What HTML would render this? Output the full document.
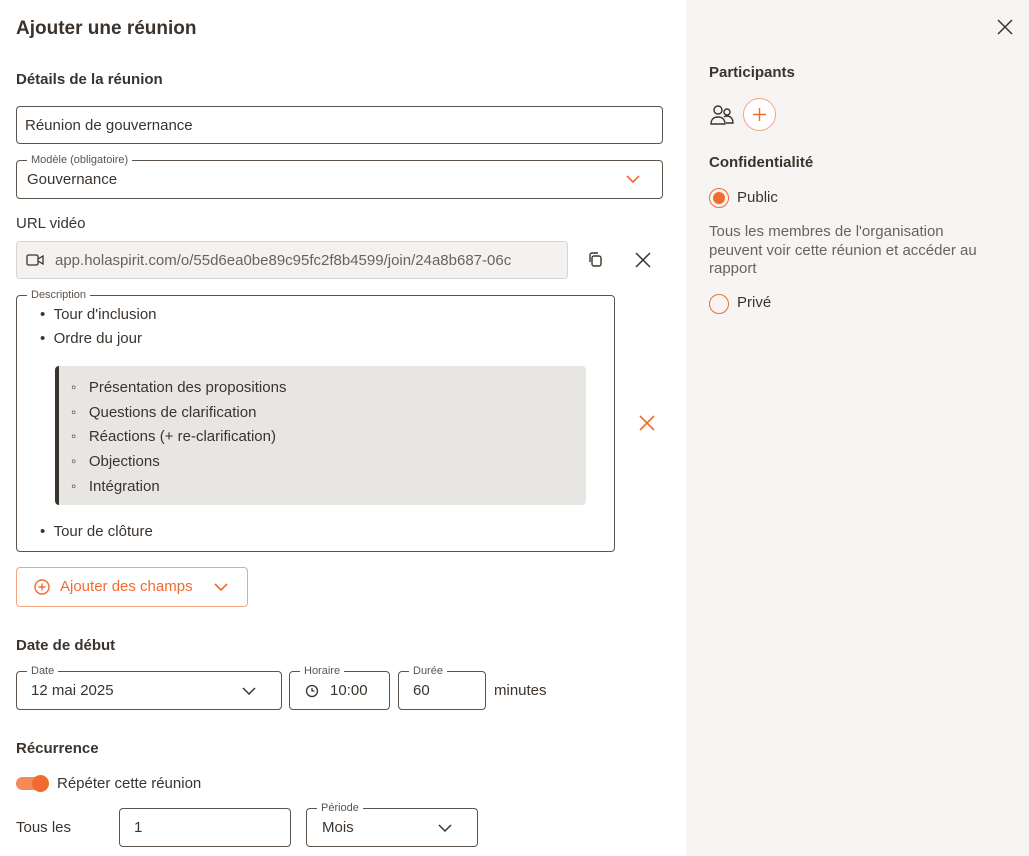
<!DOCTYPE html>
<html><head><meta charset="utf-8"><style>
*{box-sizing:border-box;margin:0;padding:0}
body{width:1029px;height:856px;overflow:hidden;font-family:"Liberation Sans",sans-serif;color:#3b332d;background:#fff;position:relative;font-size:15px}
.a{position:absolute}
.h{font-weight:bold;font-size:15px;color:#3b332d}
.box{position:absolute;border:1px solid #5d534b;border-radius:4px}
.lbl{position:absolute;top:-8px;left:10px;background:#fff;padding:0 4px;font-size:11px;color:#5d534b;line-height:14px}
.txt{position:absolute;font-size:15px;line-height:18px}
.right{position:absolute;left:686px;top:0;width:343px;height:856px;background:#f6f5f3}
</style></head><body>
<div class="a" style="left:16px;top:18px;font-size:19px;font-weight:bold">Ajouter une réunion</div>
<div class="a h" style="left:16px;top:71px">Détails de la réunion</div>
<div class="box" style="left:16px;top:106px;width:647px;height:38px"><span class="txt" style="left:8px;top:10px">Réunion de gouvernance</span></div>
<div class="box" style="left:16px;top:160px;width:647px;height:39px"><span class="lbl">Modèle (obligatoire)</span><span class="txt" style="left:10px;top:10px">Gouvernance</span>
<svg class="a" style="left:608px;top:12px" width="16" height="12" viewBox="0 0 16 12"><path d="M2 3l6 6 6-6" fill="none" stroke="#f26b2e" stroke-width="1.6"/></svg></div>
<div class="a" style="left:16px;top:215px">URL vidéo</div>
<div class="a" style="left:16px;top:241px;width:552px;height:38px;background:#f3f2f0;border:1px solid #d8d4d0;border-radius:4px;overflow:hidden">
<svg class="a" style="left:9px;top:11px" width="18" height="14" viewBox="0 0 18 14"><rect x="1" y="2" width="11" height="10" rx="1.5" fill="none" stroke="#3b332d" stroke-width="1.3"/><path d="M12 6l5-3v8l-5-3" fill="none" stroke="#3b332d" stroke-width="1.3"/></svg>
<span class="txt" style="left:38px;top:10px;color:#6b625b;white-space:nowrap">app.holaspirit.com/o/55d6ea0be89c95fc2f8b4599/join/24a8b687-06c</span></div>
<svg class="a" style="left:587px;top:251px" width="18" height="18" viewBox="0 0 18 18"><rect x="5" y="5" width="9" height="10" rx="2" fill="none" stroke="#3b332d" stroke-width="1.4"/><path d="M3 11V4a2 2 0 0 1 2-2h6" fill="none" stroke="#3b332d" stroke-width="1.4"/></svg>
<svg class="a" style="left:634px;top:251px" width="18" height="18" viewBox="0 0 18 18"><path d="M2 2l14 14M16 2L2 16" stroke="#3b332d" stroke-width="1.5"/></svg>
<div class="box" style="left:16px;top:295px;width:599px;height:257px"><span class="lbl">Description</span>
<div class="txt" style="left:23px;top:10px">• &nbsp;Tour d'inclusion</div>
<div class="txt" style="left:23px;top:34px">• &nbsp;Ordre du jour</div>
<div class="a" style="left:38px;top:70px;width:531px;height:139px;background:#e8e6e3;border-left:4px solid #3b332d;border-radius:4px">
<div class="txt" style="left:12px;top:10px;line-height:24.7px">◦ &nbsp;&nbsp;Présentation des propositions<br>◦ &nbsp;&nbsp;Questions de clarification<br>◦ &nbsp;&nbsp;Réactions (+ re-clarification)<br>◦ &nbsp;&nbsp;Objections<br>◦ &nbsp;&nbsp;Intégration</div></div>
<div class="txt" style="left:23px;top:227px">• &nbsp;Tour de clôture</div>
</div>
<svg class="a" style="left:639px;top:415px" width="16" height="16" viewBox="0 0 16 16"><path d="M1 1l14 14M15 1L1 15" stroke="#f26b2e" stroke-width="1.6"/></svg>
<div class="a" style="left:16px;top:567px;width:232px;height:40px;border:1px solid #f5a47e;border-radius:4px;color:#f26b2e">
<svg class="a" style="left:16px;top:10px" width="18" height="18" viewBox="0 0 18 18"><circle cx="9" cy="9" r="7" fill="none" stroke="#f26b2e" stroke-width="1.4"/><path d="M9 5.5v7M5.5 9h7" stroke="#f26b2e" stroke-width="1.4"/></svg>
<span class="txt" style="left:43px;top:10px">Ajouter des champs</span>
<svg class="a" style="left:196px;top:13px" width="16" height="12" viewBox="0 0 16 12"><path d="M2 3l6 6 6-6" fill="none" stroke="#f26b2e" stroke-width="1.6"/></svg></div>
<div class="a h" style="left:16px;top:637px">Date de début</div>
<div class="box" style="left:16px;top:671px;width:266px;height:39px"><span class="lbl">Date</span><span class="txt" style="left:14px;top:10px">12 mai 2025</span>
<svg class="a" style="left:224px;top:13px" width="16" height="12" viewBox="0 0 16 12"><path d="M2 3l6 6 6-6" fill="none" stroke="#3b332d" stroke-width="1.5"/></svg></div>
<div class="box" style="left:289px;top:671px;width:101px;height:39px"><span class="lbl">Horaire</span>
<svg class="a" style="left:15px;top:12px" width="14" height="14" viewBox="0 0 14 14"><circle cx="7" cy="7" r="5.5" fill="none" stroke="#3b332d" stroke-width="1.3"/><path d="M7 4v3h2.5" fill="none" stroke="#3b332d" stroke-width="1.3"/></svg>
<span class="txt" style="left:40px;top:10px">10:00</span></div>
<div class="box" style="left:398px;top:671px;width:88px;height:39px"><span class="lbl">Durée</span><span class="txt" style="left:14px;top:10px">60</span></div>
<div class="a" style="left:494px;top:682px">minutes</div>
<div class="a h" style="left:16px;top:740px">Récurrence</div>
<div class="a" style="left:16px;top:777px;width:30px;height:13px;background:#f5895a;border-radius:7px"></div>
<div class="a" style="left:32px;top:775px;width:17px;height:17px;background:#f26b2e;border-radius:50%"></div>
<div class="a" style="left:57px;top:775px">Répéter cette réunion</div>
<div class="a" style="left:16px;top:819px">Tous les</div>
<div class="box" style="left:119px;top:808px;width:172px;height:39px"><span class="txt" style="left:14px;top:10px">1</span></div>
<div class="box" style="left:306px;top:808px;width:172px;height:39px"><span class="lbl">Période</span><span class="txt" style="left:15px;top:10px">Mois</span>
<svg class="a" style="left:130px;top:13px" width="16" height="12" viewBox="0 0 16 12"><path d="M2 3l6 6 6-6" fill="none" stroke="#3b332d" stroke-width="1.5"/></svg></div>

<div class="right">
<svg class="a" style="left:311px;top:19px" width="16" height="16" viewBox="0 0 16 16"><path d="M1 1l14 14M15 1L1 15" stroke="#3b332d" stroke-width="1.5"/></svg>
<div class="a h" style="left:23px;top:64px">Participants</div>
<svg class="a" style="left:23px;top:103px" width="26" height="24" viewBox="0 0 26 24"><circle cx="9" cy="7" r="4" fill="none" stroke="#3b332d" stroke-width="1.4"/><circle cx="18" cy="9" r="3" fill="none" stroke="#3b332d" stroke-width="1.4"/><path d="M2 21c0-5 3-7 7-7s7 2 7 7z" fill="none" stroke="#3b332d" stroke-width="1.4"/><path d="M15 14c1-1 2-1 3-1 3 0 6 2 6 7h-7" fill="none" stroke="#3b332d" stroke-width="1.4"/></svg>
<div class="a" style="left:57px;top:98px;width:33px;height:33px;border:1px solid #f5a47e;border-radius:50%;background:#fff"></div>
<svg class="a" style="left:66px;top:107px" width="15" height="15" viewBox="0 0 15 15"><path d="M7.5 1v13M1 7.5h13" stroke="#f26b2e" stroke-width="1.4"/></svg>
<div class="a h" style="left:23px;top:154px">Confidentialité</div>
<div class="a" style="left:23px;top:188px;width:20px;height:20px;border:1.5px solid #f26b2e;border-radius:50%"></div>
<div class="a" style="left:27px;top:192px;width:12px;height:12px;background:#f26b2e;border-radius:50%"></div>
<div class="a" style="left:51px;top:189px">Public</div>
<div class="a" style="left:23px;top:223px;color:#6b625b;line-height:18.5px;width:300px">Tous les membres de l'organisation<br>peuvent voir cette réunion et accéder au<br>rapport</div>
<div class="a" style="left:23px;top:294px;width:20px;height:20px;border:1.5px solid #f26b2e;border-radius:50%"></div>
<div class="a" style="left:51px;top:294px">Privé</div>
</div>
</body></html>
